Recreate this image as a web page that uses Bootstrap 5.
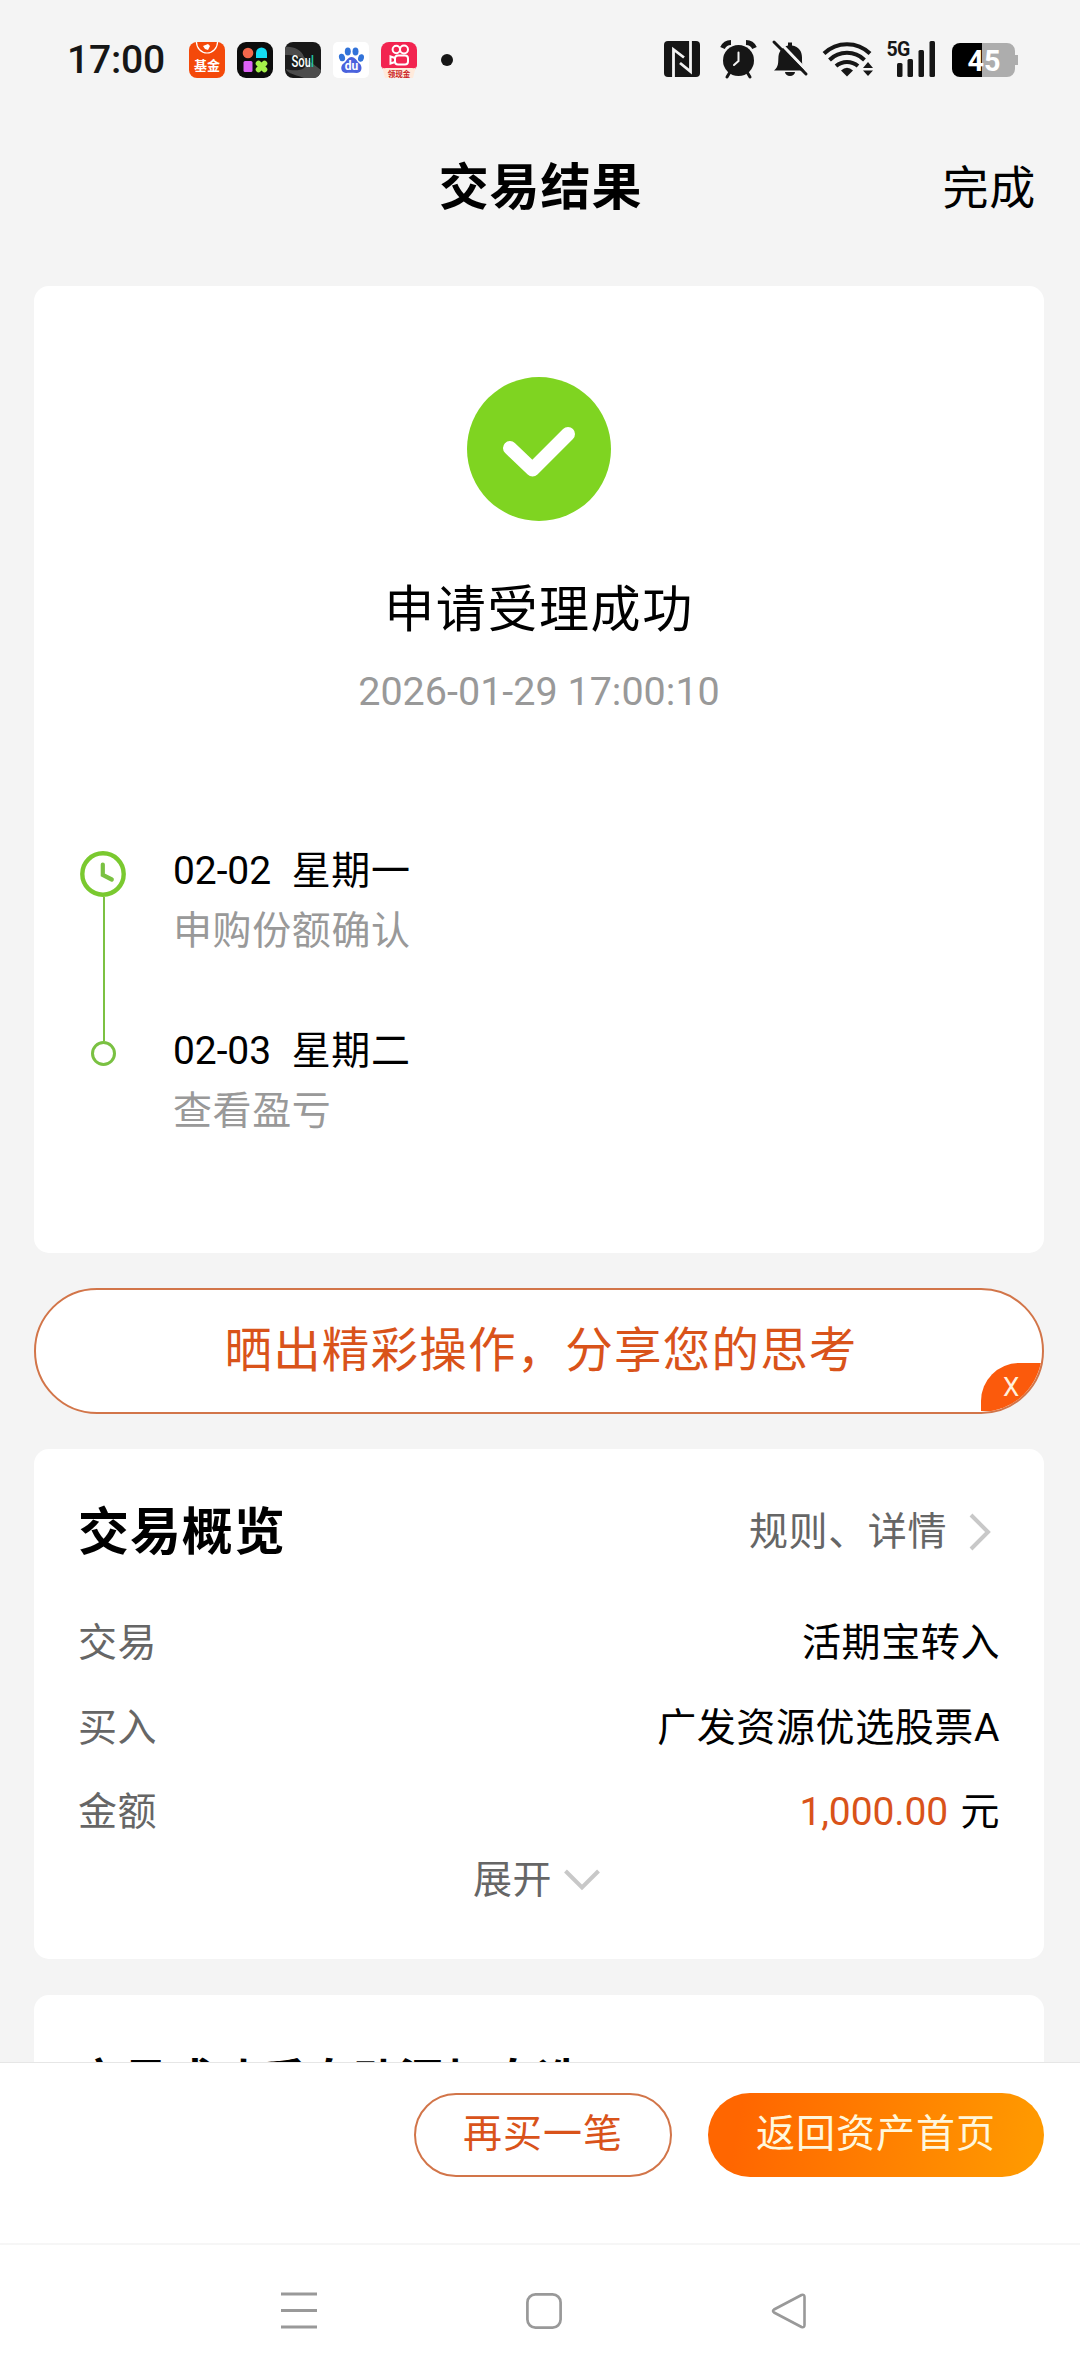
<!DOCTYPE html>
<html lang="zh-CN">
<head>
<meta charset="utf-8">
<meta name="viewport" content="width=device-width, initial-scale=1">
<title>交易结果</title>
<link href="https://cdn.jsdelivr.net/npm/bootstrap@5.3.0/dist/css/bootstrap.min.css" rel="stylesheet">
<style>
  body{background:#f4f4f4;color:#000;font-family:Roboto,"Noto Sans CJK SC",sans-serif;font-size:39px;line-height:50px;letter-spacing:.6px}
  svg{display:block;flex:none;overflow:visible}
  .screen{width:1080px;height:2376px}
  .main-area{min-height:0}
  .statusbar{height:120px;padding:0 62px 0 67px}
  .clock{font-size:39px;font-weight:500;color:#161616;letter-spacing:-.2px;width:122px}
  .apps{gap:12px}
  .titlebar{height:136px;margin-bottom:30px;padding:0 44px}
  .titlebar h1{font-size:50px;letter-spacing:.9px;padding-left:1px}
  .done{font-size:46px;letter-spacing:.8px}
  .panel{border:0;border-radius:15px;margin:0 36px 0 34px;background:#fff}
  .result{height:967px;padding-top:91px}
  .result-title{font-size:50px;line-height:60px;letter-spacing:1.6px;margin-top:59px}
  .result-time{font-size:39.5px;line-height:48px;letter-spacing:0;margin-top:28px;color:#999}
  .timeline{margin-top:129px;padding-left:46px}
  .step{height:180px;gap:47px}
  .rail{width:46px}
  .rail-line{width:2px;background:#7cc142;margin-left:1px}
  .rail-end{flex:none;height:16px}
  .grey9{color:#999}.grey6{color:#666}
  .step-day{white-space:pre;padding-top:1px}
  .step-day b{font-weight:400;letter-spacing:-.1px;word-spacing:.8px}
  .step-note{margin-top:10px}
  .share{height:126px;margin:35px 36px 35px 34px;border:2px solid #d27549;border-radius:63px;background:#fff;color:#d9531a;font-size:47.5px;letter-spacing:1.2px;padding-left:4px}
  .share-close{right:0;bottom:1px;width:61px;height:48px;background:#fb5a0c;border-top-left-radius:38px;color:#fff0dc;font-size:26px;line-height:49px;letter-spacing:0;padding-left:22px}
  .overview{height:510px;padding:54px 44px 0 44px}
  .overview h2,.watch h2{font-size:51px;line-height:60px;letter-spacing:.9px}
  .overview-head{height:60px;margin-bottom:38px}
  .more{gap:22px;padding:0 9px 2px 0}
  .kv{height:84.5px}
  .amount{color:#d9531a;letter-spacing:-.1px;margin-right:2px}
  .expand{gap:12px;padding-right:5px}
  .watch{margin-top:36px;padding:57px 44px 0 43px;height:160px}
  .watch h2{font-size:45px;letter-spacing:1px}
  .actions{height:181px;background:#fff;border-top:1px solid #e6e6e6;padding:30px 36px 0 0;gap:36px}
  .pill{height:84px;border-radius:42px;font-size:39px;line-height:50px;letter-spacing:1px;padding:0 0 2px}
  .pill-line{width:258px;border:2px solid #d27549;color:#d9531a;background:#fff}
  .pill-fill{width:336px;border:0;background:linear-gradient(100deg,#ff6600 10%,#ff9900 95%);color:#fff7dc}
  .sysnav{height:133px;background:#fff;border-top:2px solid #f6f6f6;padding:0 273px 0 281px}
</style>
</head>
<body>
<div class="screen d-flex flex-column overflow-hidden">
  <main class="main-area flex-grow-1 overflow-hidden">
    <div class="statusbar d-flex align-items-center">
      <span class="clock">17:00</span>
      <div class="apps d-flex">
        <svg width="36" height="36" viewBox="0 0 36 36"><rect width="36" height="36" rx="8" fill="#f4490a"/><path d="M7.500 0a10.500 11 0 0 0 21 0" fill="none" stroke="#fff" stroke-width="1.200"/><path d="M14 4l5-2 2 2-2 4-3-1zM16 3l2 3" fill="#fff"/><text x="18" y="28" font-size="13" font-weight="700" fill="#fff" text-anchor="middle" letter-spacing="0">基金</text></svg>
        <svg width="36" height="36" viewBox="0 0 36 36"><rect width="36" height="36" rx="9" fill="#0c0c0c"/><circle cx="11" cy="11" r="5.300" fill="#f3674c"/><path d="M19 16v-5a5.500 5.500 0 0 1 11 0v5z" fill="#14dcf4"/><rect x="6.500" y="19" width="9" height="11" rx="1.500" fill="#dc62f5"/><path d="M21.500 21.500l6 6m0-6l-6 6" stroke="#a4f04a" stroke-width="5.600" stroke-linecap="round"/></svg>
        <svg width="36" height="36" viewBox="0 0 36 36"><clipPath id="soulClip"><rect width="36" height="36" rx="8"/></clipPath><linearGradient id="soulInk"><stop offset=".83" stop-color="#fff"/><stop offset=".83" stop-color="#23c9ad"/></linearGradient><g clip-path="url(#soulClip)"><rect width="36" height="36" fill="#181818"/><path d="M0 5c8-1 17 3 19 10l17 13v8H19C8 32 0 31 0 24z" fill="#4c4c4c"/><path d="M0 13c8 0 19 1 21 7 2 8-9 10-21 7z" fill="#1c1c1c"/></g><text transform="translate(6.500 24.500) scale(.78 1.150)" font-size="14.500" font-weight="500" fill="url(#soulInk)" letter-spacing="0">Soul</text></svg>
        <svg width="36" height="36" viewBox="0 0 36 36"><rect width="36" height="36" rx="5" fill="#fff"/><g fill="#3273d9"><ellipse cx="9" cy="15.500" rx="3" ry="3.800" transform="rotate(-15 9 15.500)"/><ellipse cx="14.800" cy="9.500" rx="3" ry="4"/><ellipse cx="22.500" cy="9.500" rx="3" ry="4"/><ellipse cx="28" cy="16" rx="2.900" ry="3.800" transform="rotate(15 28 16)"/></g><path d="M18.500 15c4 0 5 4 8 6.500s3 9-2.500 9.500c-4 0-7-.5-11 0-5.500-.5-6-7-2.500-9.500S14.500 15 18.500 15z" fill="#4a62dd"/><text x="18.600" y="28" font-size="12" font-weight="700" fill="#fff" text-anchor="middle" letter-spacing="0">du</text></svg>
        <svg width="36" height="36" viewBox="0 0 36 36"><rect width="36" height="30" rx="8" fill="#f22450"/><path d="M1 24h34l-3 12H4z" fill="#ffeadb"/><path d="M0 20h36v2q0 5-5 4H5q-5 1-5-4z" fill="#f22450"/><g fill="none" stroke="#fff" stroke-width="2"><circle cx="15.300" cy="7.500" r="3.700"/><circle cx="23" cy="7.500" r="4"/><rect x="14" y="13.500" width="13" height="9" rx="3"/><path d="M14 16l-4.500-1.500v7L14 20"/></g><text x="18" y="34.500" font-size="7.500" font-weight="700" fill="#c91c26" text-anchor="middle" letter-spacing="0">领现金</text></svg>
      </div>
      <svg class="ms-4" width="12" height="12"><circle cx="6" cy="6" r="6" fill="#161616"/></svg>
      <svg class="ms-auto" width="356" height="40" viewBox="662 40 356 40" fill="#161616">
        <rect x="664" y="41" width="36" height="36" rx="4"/>
        <path d="M673.500 77V49.500L684 57.500M690.500 41v30.500L680 63" fill="none" stroke="#f4f4f4" stroke-width="2.800"/>
        <circle cx="738.500" cy="60.500" r="15.500"/>
        <path d="M722.500 48a9.500 9.500 0 0 1 8.500-5.500M754.500 48a9.500 9.500 0 0 0-8.500-5.500" fill="none" stroke="#161616" stroke-width="5"/>
        <path d="M730 72l-3 5M747 72l3 5" stroke="#161616" stroke-width="3" stroke-linecap="round"/>
        <path d="M738.500 52.500v8.500l-4.500 4" fill="none" stroke="#f4f4f4" stroke-width="2" stroke-linecap="round"/>
        <path d="M774 70.500c5-4 4-8 4.500-14.500 1-6 5-9.500 9.500-10.500v-3h4v3c7 1 10 6 10 12 0 7 0 9 4 13z"/>
        <path d="M785 72h10a5 4 0 0 1-10 0z"/>
        <path d="M776 38.500L809 73" stroke="#f4f4f4" stroke-width="3"/>
        <path d="M774 42l32 32" stroke="#161616" stroke-width="3" stroke-linecap="round"/>
        <g fill="none" stroke="#161616" stroke-width="4"><path d="M824 53.500a33 33 0 0 1 46 0M829.500 60a25 25 0 0 1 35 0M836 66a17 17 0 0 1 22 0"/></g>
        <path d="M847 76.500l-6-6q6-5.500 12 0z"/><path d="M868 62l5 6h-10zM868 76l5-5.500h-10z"/>
        <text x="886.500" y="56" font-size="19.500" font-weight="700" letter-spacing="-.6">5G</text>
        <rect x="897" y="63" width="5.500" height="14" rx="1.500"/><rect x="907.500" y="59" width="5.500" height="18" rx="1.500"/><rect x="918.500" y="50" width="5.500" height="27" rx="1.500"/><rect x="929.500" y="41" width="5.500" height="36" rx="1.500"/>
        <path d="M982 43h25a8 8 0 0 1 8 8v4h3v10h-3v4a8 8 0 0 1-8 8h-25z" fill="#adadad"/><path d="M982 43h-22a8 8 0 0 0-8 8v18a8 8 0 0 0 8 8h22z" fill="#000"/>
        <text x="967.500" y="70.500" font-size="29" font-weight="700" fill="#fff" letter-spacing="0" textLength="33" lengthAdjust="spacingAndGlyphs">45</text>
      </svg>
    </div>

    <header class="titlebar row g-0 align-items-center">
      <div class="col"></div>
      <h1 class="col-auto m-0 fw-bold">交易结果</h1>
      <div class="col text-end done">完成</div>
    </header>

    <section class="panel card result">
      <div class="d-flex flex-column align-items-center">
        <svg width="144" height="144" viewBox="0 0 144 144"><circle cx="72" cy="72" r="72" fill="#7fd421"/><path d="M43 71l22.500 21.500L101 57" fill="none" stroke="#fff" stroke-width="14" stroke-linecap="round" stroke-linejoin="round"/></svg>
        <div class="result-title">申请受理成功</div>
        <div class="result-time">2026-01-29 17:00:10</div>
      </div>
      <div class="timeline">
        <div class="step d-flex">
          <div class="rail d-flex flex-column align-items-center">
            <svg class="mt-1" width="46" height="48" viewBox="0 0 46 48"><circle cx="23" cy="25" r="20.700" fill="none" stroke="#7ac92f" stroke-width="4.400"/><path d="M22.800 15.500V26l9 4.500" fill="none" stroke="#7ac142" stroke-width="4.200" stroke-linecap="round"/></svg>
            <div class="rail-line flex-grow-1"></div>
          </div>
          <div>
            <div class="step-day"><b>02-02  </b>星期一</div>
            <div class="step-note grey9">申购份额确认</div>
          </div>
        </div>
        <div class="step d-flex">
          <div class="rail d-flex flex-column align-items-center">
            <div class="rail-line rail-end"></div>
            <svg width="25" height="25"><circle cx="12.500" cy="12.500" r="11" fill="none" stroke="#7ac142" stroke-width="3"/></svg>
          </div>
          <div>
            <div class="step-day"><b>02-03  </b>星期二</div>
            <div class="step-note grey9">查看盈亏</div>
          </div>
        </div>
      </div>
    </section>

    <div class="share position-relative overflow-hidden d-flex align-items-center justify-content-center">
      晒出精彩操作，分享您的思考
      <span class="share-close position-absolute">X</span>
    </div>

    <section class="panel card overview">
      <div class="overview-head d-flex justify-content-between align-items-center">
        <h2 class="m-0 fw-bold">交易概览</h2>
        <div class="more d-flex align-items-center grey6"><span>规则、详情</span>
          <svg width="22" height="38" viewBox="0 0 22 38"><path d="M2 2l17 17L2 36" fill="none" stroke="#c8c8c8" stroke-width="4"/></svg></div>
      </div>
      <div class="kv d-flex justify-content-between align-items-center"><span class="grey6">交易</span><span>活期宝转入</span></div>
      <div class="kv d-flex justify-content-between align-items-center"><span class="grey6">买入</span><span>广发资源优选股票A</span></div>
      <div class="kv d-flex justify-content-between align-items-center"><span class="grey6">金额</span><span><span class="amount">1,000.00</span> 元</span></div>
      <div class="expand d-flex justify-content-center align-items-center grey6">展开
        <svg width="36" height="22" viewBox="0 0 36 22"><path d="M1.500 2L18 18.500 34.500 2" fill="none" stroke="#c8c8c8" stroke-width="4"/></svg></div>
    </section>

    <section class="panel card watch"><h2 class="fw-bold">交易成功后自动添加自选</h2></section>
  </main>

  <div class="actions d-flex justify-content-end align-items-start flex-shrink-0">
    <button class="btn pill pill-line">再买一笔</button>
    <button class="btn pill pill-fill">返回资产首页</button>
  </div>
  <nav class="sysnav d-flex justify-content-between align-items-center flex-shrink-0">
    <svg width="36" height="37" viewBox="0 0 36 37"><path d="M0 2h36M0 18.500h36M0 35h36" stroke="#999" stroke-width="3"/></svg>
    <svg width="36" height="36" viewBox="0 0 36 36"><rect x="1.400" y="1.400" width="33.200" height="33.200" rx="8" fill="none" stroke="#999" stroke-width="2.700"/></svg>
    <svg width="36" height="36" viewBox="0 0 36 36"><path d="M30.500 2L3 16.500q-2 1.500 0 3L30.500 34q3 1 3-2V4q0-3-3-2z" fill="none" stroke="#999" stroke-width="2.600" stroke-linejoin="round"/></svg>
  </nav>
</div>
<script src="https://cdn.jsdelivr.net/npm/bootstrap@5.3.0/dist/js/bootstrap.bundle.min.js"></script>
</body>
</html>
